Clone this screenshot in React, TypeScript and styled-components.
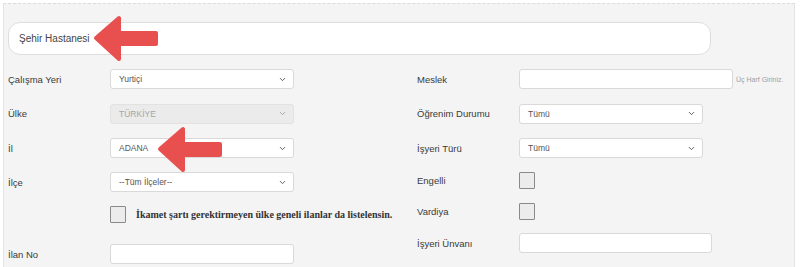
import styled, { createGlobalStyle } from 'styled-components';
import { ChevronDown } from 'lucide-react';

const GlobalStyle = createGlobalStyle`
  html, body {
    margin: 0;
    padding: 0;
    background: #ffffff;
  }
  body {
    font-family: 'Liberation Sans', Arial, sans-serif;
  }
`;

interface Field {
  label: string;
  kind: 'select' | 'input' | 'check' | 'none';
  value?: string;
  disabled?: boolean;
  width?: number;
  height: number;
  hint?: string;
  note?: string;
}

const leftFields: Field[] = [
  { label: 'Çalışma Yeri', kind: 'select', value: 'Yurtiçi', height: 34 },
  { label: 'Ülke', kind: 'select', value: 'TÜRKİYE', disabled: true, height: 35 },
  { label: 'İl', kind: 'select', value: 'ADANA', height: 34 },
  { label: 'İlçe', kind: 'select', value: '--Tüm İlçeler--', height: 34 },
  {
    label: '',
    kind: 'check',
    height: 30,
    note: 'İkamet şartı gerektirmeyen ülke geneli ilanlar da listelensin.',
  },
  { label: 'İlan No', kind: 'input', height: 50 },
];

const rightFields: Field[] = [
  { label: 'Meslek', kind: 'input', width: 214, height: 34, hint: 'Üç Harf Giriniz.' },
  { label: 'Öğrenim Durumu', kind: 'select', value: 'Tümü', height: 35 },
  { label: 'İşyeri Türü', kind: 'select', value: 'Tümü', height: 34 },
  { label: 'Engelli', kind: 'check', height: 30 },
  { label: 'Vardiya', kind: 'check', height: 32 },
  { label: 'İşyeri Ünvanı', kind: 'input', width: 193, height: 32 },
];

function FieldRow({ field }: { field: Field }) {
  return (
    <Row $height={field.height}>
      <Label>{field.label}</Label>
      {field.kind === 'select' && (
        <SelectBox $disabled={field.disabled}>
          <span>{field.value}</span>
          <ChevronDown size={9} strokeWidth={2.5} />
        </SelectBox>
      )}
      {field.kind === 'input' && <TextBox $width={field.width ?? 184} />}
      {field.kind === 'check' && (
        <CheckWrap>
          <CheckBox />
          {field.note && <CheckNote>{field.note}</CheckNote>}
        </CheckWrap>
      )}
      {field.hint && <Hint>{field.hint}</Hint>}
    </Row>
  );
}

function Arrow({ left, top }: { left: number; top: number }) {
  return (
    <ArrowSvg style={{ left, top }} width="70" height="48" viewBox="0 0 70 48">
      <path
        d="M4 24 L27 4 L27 19 L64 19 L64 30 L27 30 L27 45 Z"
        fill="#e8504f"
        stroke="#e8504f"
        strokeWidth="4"
        strokeLinejoin="round"
      />
    </ArrowSvg>
  );
}

export default function App() {
  return (
    <Page>
      <GlobalStyle />
      <Panel>
        <SearchBox>Şehir Hastanesi</SearchBox>
        <Columns>
          <Column $width={409}>
            {leftFields.map((f, i) => (
              <FieldRow key={i} field={f} />
            ))}
          </Column>
          <Column $width={377}>
            {rightFields.map((f, i) => (
              <FieldRow key={i} field={f} />
            ))}
          </Column>
        </Columns>
      </Panel>
      <Arrow left={92} top={14} />
      <Arrow left={156} top={125} />
    </Page>
  );
}

const Page = styled.div`
  position: relative;
  width: 800px;
  height: 267px;
  overflow: hidden;
  background: #ffffff;
  padding: 3px 5px 0 3px;
  box-sizing: border-box;
`;

const Panel = styled.div`
  height: 280px;
  background: #f4f4f4;
  border: 1px solid #e4e4e4;
  border-top: 1px dashed #dcdcdc;
  padding: 18px 0 0 4px;
  box-sizing: border-box;
`;

const SearchBox = styled.div`
  width: 703px;
  height: 33px;
  box-sizing: border-box;
  background: #ffffff;
  border: 1px solid #dedede;
  border-radius: 12px;
  display: flex;
  align-items: center;
  padding-left: 10px;
  font-size: 10px;
  color: #444;
`;

const Columns = styled.div`
  display: flex;
  margin-top: 7px;
`;

const Column = styled.div<{ $width: number }>`
  display: flex;
  flex-direction: column;
  width: ${({ $width }) => $width}px;
  flex-shrink: 0;
`;

const Row = styled.div<{ $height: number }>`
  display: flex;
  align-items: center;
  height: ${({ $height }) => $height}px;
`;

const Label = styled.div`
  width: 102px;
  flex-shrink: 0;
  font-size: 9.5px;
  color: #3a3a3a;
`;

const SelectBox = styled.div<{ $disabled?: boolean }>`
  width: 184px;
  height: 20px;
  box-sizing: border-box;
  display: flex;
  align-items: center;
  justify-content: space-between;
  padding: 0 6px 0 8px;
  background: ${({ $disabled }) => ($disabled ? '#ebebeb' : '#ffffff')};
  border: 1px solid ${({ $disabled }) => ($disabled ? '#e2e2e2' : '#d9d9d9')};
  border-radius: 3px;
  font-size: 8.5px;
  color: ${({ $disabled }) => ($disabled ? '#a5a5a5' : '#555')};

  svg {
    color: ${({ $disabled }) => ($disabled ? '#a0a0a0' : '#555')};
  }
`;

const TextBox = styled.div<{ $width: number }>`
  width: ${({ $width }) => $width}px;
  height: 20px;
  box-sizing: border-box;
  background: #ffffff;
  border: 1px solid #d9d9d9;
  border-radius: 3px;
`;

const CheckWrap = styled.div`
  display: flex;
  align-items: center;
  gap: 10px;
`;

const CheckBox = styled.div`
  width: 16px;
  height: 17px;
  box-sizing: border-box;
  background: #ececec;
  border: 1px solid #8a8a8a;
  border-radius: 1px;
`;

const CheckNote = styled.span`
  font-family: 'Liberation Serif', 'Times New Roman', serif;
  font-weight: bold;
  font-size: 10px;
  color: #333;
  white-space: nowrap;
`;

const Hint = styled.span`
  margin-left: 3px;
  font-size: 7px;
  color: #a0a0a0;
  white-space: nowrap;
`;

const ArrowSvg = styled.svg`
  position: absolute;
`;
